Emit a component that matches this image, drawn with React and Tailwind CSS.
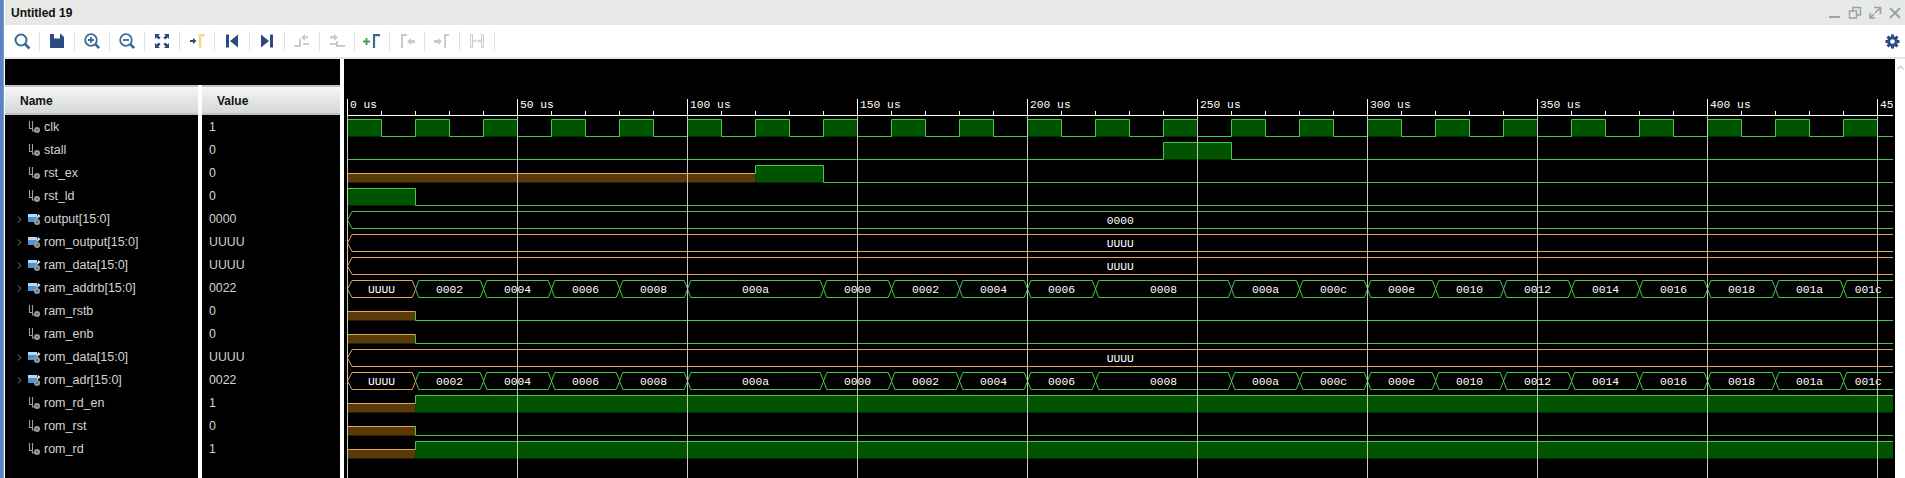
import { ChevronRight, ChevronUp } from 'lucide-react'

const sans = { fontFamily: '"Liberation Sans", Arial, sans-serif' }

const X0 = 347.5
const PX = 3.4
const END = 1893
const xAt = (t) => X0 + t * PX
const GREEN = '#46c846'
const ORANGE = '#e0a458'
const FILL = '#005400'
const BROWN = '#5a3a08'

const addr = [
  [0, 20, 'UUUU'], [20, 40, '0002'], [40, 60, '0004'], [60, 80, '0006'], [80, 100, '0008'],
  [100, 140, '000a'], [140, 160, '0000'], [160, 180, '0002'], [180, 200, '0004'], [200, 220, '0006'],
  [220, 260, '0008'], [260, 280, '000a'], [280, 300, '000c'], [300, 320, '000e'], [320, 340, '0010'],
  [340, 360, '0012'], [360, 380, '0014'], [380, 400, '0016'], [400, 420, '0018'], [420, 440, '001a'],
  [440, 480, '001c'],
]

const clkSteps = []
for (let t = 0; t < 460; t += 20) clkSteps.push([t, t + 10, '1'], [t + 10, t + 20, '0'])

const rows = [
  { name: 'clk', value: '1', steps: clkSteps },
  { name: 'stall', value: '0', steps: [[0, 240, '0'], [240, 260, '1'], [260, 480, '0']] },
  { name: 'rst_ex', value: '0', steps: [[0, 120, 'U'], [120, 140, '1'], [140, 480, '0']] },
  { name: 'rst_ld', value: '0', steps: [[0, 20, '1'], [20, 480, '0']] },
  { name: 'output[15:0]', value: '0000', bus: [[0, 480, '0000']] },
  { name: 'rom_output[15:0]', value: 'UUUU', bus: [[0, 480, 'UUUU']] },
  { name: 'ram_data[15:0]', value: 'UUUU', bus: [[0, 480, 'UUUU']] },
  { name: 'ram_addrb[15:0]', value: '0022', bus: addr },
  { name: 'ram_rstb', value: '0', steps: [[0, 20, 'U'], [20, 480, '0']] },
  { name: 'ram_enb', value: '0', steps: [[0, 20, 'U'], [20, 480, '0']] },
  { name: 'rom_data[15:0]', value: 'UUUU', bus: [[0, 480, 'UUUU']] },
  { name: 'rom_adr[15:0]', value: '0022', bus: addr },
  { name: 'rom_rd_en', value: '1', steps: [[0, 20, 'U'], [20, 480, '1']] },
  { name: 'rom_rst', value: '0', steps: [[0, 20, 'U'], [20, 480, '0']] },
  { name: 'rom_rd', value: '1', steps: [[0, 20, 'U'], [20, 480, '1']] },
]

function levelY(level, hi, lo) {
  if (level === '1') return hi
  if (level === '0') return lo
  return (hi + lo) / 2 - 0.5
}

function StepWave({ steps, index }) {
  const hi = 119.5 + 23 * index
  const lo = 136.5 + 23 * index
  return (
    <g>
      {steps.map(([a, b, level], i) => {
        if (level === '0') return null
        const y = levelY(level, hi, lo)
        return (
          <rect key={i} x={xAt(a)} y={y} width={xAt(b) - xAt(a)} height={lo - y} fill={level === 'U' ? BROWN : FILL} />
        )
      })}
      {steps.map(([a, b, level], i) => {
        const y = levelY(level, hi, lo)
        const next = steps[i + 1]
        const color = level === 'U' ? ORANGE : GREEN
        return (
          <g key={i}>
            <line x1={xAt(a)} x2={xAt(b)} y1={y} y2={y} stroke={color} />
            {next && (
              <line x1={xAt(b)} x2={xAt(b)} y1={y} y2={levelY(next[2], hi, lo)} stroke={GREEN} />
            )}
          </g>
        )
      })}
    </g>
  )
}

function BusWave({ segs, index }) {
  const hi = 119.5 + 23 * index
  const lo = 136.5 + 23 * index
  const mid = (hi + lo) / 2
  return (
    <g>
      {segs.map(([a, b, label]) => {
        const x1 = xAt(a)
        const x2 = xAt(b)
        const t = a === 0 ? 4.5 : 3.3
        const color = label === 'UUUU' ? ORANGE : GREEN
        const d = `M${x2 + 0.2} ${mid}L${x2 - 3.3} ${hi}L${x1 + t} ${hi}L${x1} ${mid}L${x1 + t} ${lo}L${x2 - 3.3} ${lo}Z`
        const cx = (x1 + Math.min(x2, END)) / 2
        return (
          <g key={a}>
            <path d={d} fill="none" stroke={color} />
            <text x={cx} y={mid + 4} textAnchor="middle" fill="#ffffff" fontSize="11.300" style={{ fontFamily: '"Liberation Mono", monospace' }}>
              {label}
            </text>
          </g>
        )
      })}
    </g>
  )
}

function Waves() {
  const majors = []
  const minors = []
  for (let t = 0; t <= 450; t += 10) (t % 50 === 0 ? majors : minors).push(t)
  return (
    <svg width="1551" height="419" viewBox="344 59 1551 419" className="block">
      <defs>
        <clipPath id="wave-clip">
          <rect x="344" y="59" width={END - 344} height="419" />
        </clipPath>
      </defs>
      <g clipPath="url(#wave-clip)">
        <line x1={X0} x2={END} y1="115.5" y2="115.5" stroke="#ffffff" />
        {minors.map((t) => (
          <line key={t} x1={xAt(t)} x2={xAt(t)} y1="111" y2="115" stroke="#ffffff" />
        ))}
        {majors.map((t) => (
          <g key={t}>
            <line x1={xAt(t)} x2={xAt(t)} y1="99" y2="116" stroke="#ffffff" />
            <text x={xAt(t) + 2.5} y="108" fill="#ffffff" fontSize="11.300" style={{ fontFamily: '"Liberation Mono", monospace' }}>
              {t === 450 ? '45' : `${t} us`}
            </text>
          </g>
        ))}
        {rows.map((r, i) =>
          r.bus ? <BusWave key={r.name} segs={r.bus} index={i} /> : <StepWave key={r.name} steps={r.steps} index={i} />
        )}
        {majors.map((t) => (
          <line key={t} x1={xAt(t)} x2={xAt(t)} y1="116" y2="478" stroke="#c4c4c4" />
        ))}
      </g>
    </svg>
  )
}

const NAVY = '#2c4a7e'
const DIM = '#c8cccc'

const toolIcons = [
  <g fill="none" stroke="#3a6a94" strokeWidth="2"><circle cx="9" cy="9" r="5.500" /><path d="M13 13l4.500 4.500" strokeWidth="2.600" /></g>,
  <path fill={NAVY} fillRule="evenodd" d="M3 3h11l3 3v11H3zM7 3v4.500h6V3z" />,
  <g fill="none" stroke="#3a6a94" strokeWidth="1.800"><circle cx="9" cy="9" r="5.800" /><path d="M6 9h6M9 6v6" /><path d="M13.200 13.200l4 4" strokeWidth="2.600" /></g>,
  <g fill="none" stroke="#3a6a94" strokeWidth="1.800"><circle cx="9" cy="9" r="5.800" /><path d="M6 9h6" /><path d="M13.200 13.200l4 4" strokeWidth="2.600" /></g>,
  <path fill={NAVY} d="M3 3h5L6.400 4.600 8.600 6.800 6.800 8.600 4.600 6.400 3 8zM17 3v5l-1.600-1.600-2.200 2.200-1.800-1.800 2.200-2.200L12 3zM3 17v-5l1.600 1.600 2.200-2.200 1.800 1.800-2.200 2.200L8 17zM17 17h-5l1.600-1.600-2.200-2.200 1.800-1.800 2.200 2.200L17 12z" />,
  <g><path fill={NAVY} d="M3 9h3V7l3.500 3L6 13v-2H3z" /><path fill="none" stroke="#ecd98a" strokeWidth="2.400" d="M13 17V4.200h4.500" /></g>,
  <path fill={NAVY} d="M4 3.500h3v13H4zM16 3.500v13L8 10z" />,
  <path fill={NAVY} d="M13 3.500h3v13h-3zM4 3.500v13l8-6.500z" />,
  <g fill={DIM}><path d="M2 14h5V8h2v8H2z" /><path d="M16 5v2.500h-3V10l-4-3.500L13 3v2z" /><path d="M11 12h6v2h-6z" /></g>,
  <g fill={DIM}><path d="M3 5v2.500h4V10l4-3.500L7 3v2z" /><path d="M3 12h6v2H3z" /><path d="M9 10h2v4h7v2H9z" /></g>,
  <g><path fill="none" stroke="#3fa34d" strokeWidth="2" d="M1 10.500h7M4.500 7v7" /><path fill="none" stroke="#2f6f96" strokeWidth="2.200" d="M12 17V4.200h6" /></g>,
  <g><path fill="none" stroke={DIM} strokeWidth="2" d="M5 17V4h5" /><path fill={DIM} d="M18 9h-4V7l-4 3.500 4 3.500v-2h4z" /></g>,
  <g><path fill={DIM} d="M2 9h4V7l4 3.500L6 14v-2H2z" /><path fill="none" stroke={DIM} strokeWidth="2" d="M13 17V4h4" /></g>,
  <g fill="none" stroke={DIM} strokeWidth="1"><path d="M3.500 3.500h2v13h-2zM14.500 3.500h2v13h-2zM6 10h8" /><path d="M8 8.500L6.500 10 8 11.500M12 8.500l1.500 1.500-1.500 1.500" /></g>,
]

function ToolIcon({ children }) {
  return (
    <div className="w-[35px] h-[20px] flex items-center justify-center border-r border-[#e2e4e4] shrink-0">
      <svg width="20" height="20" viewBox="0 0 20 20">{children}</svg>
    </div>
  )
}

function GearIcon() {
  const teeth = [0, 45, 90, 135]
  return (
    <svg width="15" height="15" viewBox="0 0 16 16" className="ml-auto text-[#2c4a7e]">
      {teeth.map((a) => (
        <rect key={a} x="6.400" y="0.500" width="3.200" height="15" fill="currentColor" transform={`rotate(${a} 8 8)`} />
      ))}
      <circle cx="8" cy="8" r="5.600" fill="currentColor" />
      <circle cx="8" cy="8" r="2.500" fill="#ffffff" />
    </svg>
  )
}

function ScalarIcon() {
  return (
    <svg width="13" height="13" viewBox="0 0 13 13" className="shrink-0">
      <path d="M1.500 0v7.500h3M4.500 0v10h3" fill="none" stroke="#8fa897" strokeWidth="1.100" />
      <circle cx="9" cy="9" r="3" fill="#9a9a9a" />
      <circle cx="9" cy="9" r="1" fill="#555555" />
    </svg>
  )
}

function BusIcon() {
  return (
    <svg width="13" height="13" viewBox="0 0 13 13" className="shrink-0">
      <rect x="0" y="1" width="9" height="8" fill="#4f93d2" />
      <rect x="0" y="1" width="9" height="3" fill="#b6d8f2" />
      <path d="M10 1l2.500 2-4 3.500z" fill="#e2ebf2" />
      <circle cx="9" cy="9" r="3" fill="#9a9a9a" />
      <circle cx="9" cy="9" r="1" fill="#555555" />
    </svg>
  )
}

function Header({ className, children }) {
  return (
    <div className={`h-[30px] flex items-center pt-[1px] bg-gradient-to-b from-[#f4f5f5] to-[#d6d8d8] border-y-2 border-[#c0c2c2] text-[12px] font-bold text-[#111] ${className}`}>
      {children}
    </div>
  )
}

export default function App() {
  return (
    <div className="w-[1905px] h-[478px] flex overflow-hidden bg-white" style={sans}>
      <div className="w-[4px] bg-[#5b82c4] shrink-0 border-r border-[#7d9ed0]" />
      <div className="w-[1px] bg-white shrink-0" />
      <div className="flex-1 flex flex-col min-w-0">
        <div className="h-[25px] bg-[#e6e9e6] flex items-center pl-[6px] pr-[3px] shrink-0">
          <span className="text-[12px] font-bold text-[#111]">Untitled 19</span>
          <div className="ml-auto flex items-center gap-[6px] text-[#9da2a2]">
            <svg width="14" height="14" viewBox="0 0 14 14"><path d="M1 11h11" stroke="currentColor" strokeWidth="2" /></svg>
            <svg width="14" height="14" viewBox="0 0 14 14" fill="none" stroke="currentColor" strokeWidth="1.500"><path d="M1.500 5h7v7h-7zM5 5V1.500h7.500V9H9" /></svg>
            <svg width="14" height="14" viewBox="0 0 14 14" fill="none" stroke="currentColor" strokeWidth="1.600"><path d="M6 1.500h6.500V8M12 2L7 7M2 7v5h5M2.500 11.500L6 8" /></svg>
            <svg width="14" height="14" viewBox="0 0 14 14" fill="none" stroke="currentColor" strokeWidth="2"><path d="M2 2l10 10M12 2L2 12" /></svg>
          </div>
        </div>
        <div className="h-[32px] bg-white flex items-center shrink-0 pr-[5px]">
          {toolIcons.map((icon, i) => (
            <ToolIcon key={i}>{icon}</ToolIcon>
          ))}
          <GearIcon />
        </div>
        <div className="h-[2px] bg-[#e4e6e6] shrink-0" />
        <div className="flex-1 flex min-h-0">
          <div className="w-[335px] shrink-0 flex flex-col bg-black">
            <div className="h-[26px] shrink-0" />
            <div className="flex flex-1 min-h-0">
              <div className="w-[193px] shrink-0">
                <Header className="pl-[15px]">Name</Header>
                {rows.map((r) => (
                  <div key={r.name} className="h-[23px] flex items-center pt-[1px] text-[12.500px] text-[#d4d4d4]">
                    <div className="w-[23px] pl-[9px] shrink-0">
                      {r.bus && <ChevronRight size={11} strokeWidth={1.500} className="text-[#c0c0c0]" />}
                    </div>
                    {r.bus ? <BusIcon /> : <ScalarIcon />}
                    <span className="ml-[3px] whitespace-nowrap">{r.name}</span>
                  </div>
                ))}
              </div>
              <div className="w-[4px] bg-white shrink-0" />
              <div className="flex-1">
                <Header className="pl-[15px]">Value</Header>
                {rows.map((r) => (
                  <div key={r.name} className="h-[23px] flex items-center pt-[1px] pl-[7px] text-[12.300px] text-[#d4d4d4]">
                    {r.value}
                  </div>
                ))}
              </div>
            </div>
          </div>
          <div className="w-[4px] bg-white shrink-0" />
          <div className="w-[1551px] bg-black shrink-0">
            <Waves />
          </div>
          <div className="flex-1 bg-white flex justify-center pt-[3px]">
            <ChevronUp size={11} strokeWidth={2} className="text-[#9a9a9a]" />
          </div>
        </div>
      </div>
    </div>
  )
}
